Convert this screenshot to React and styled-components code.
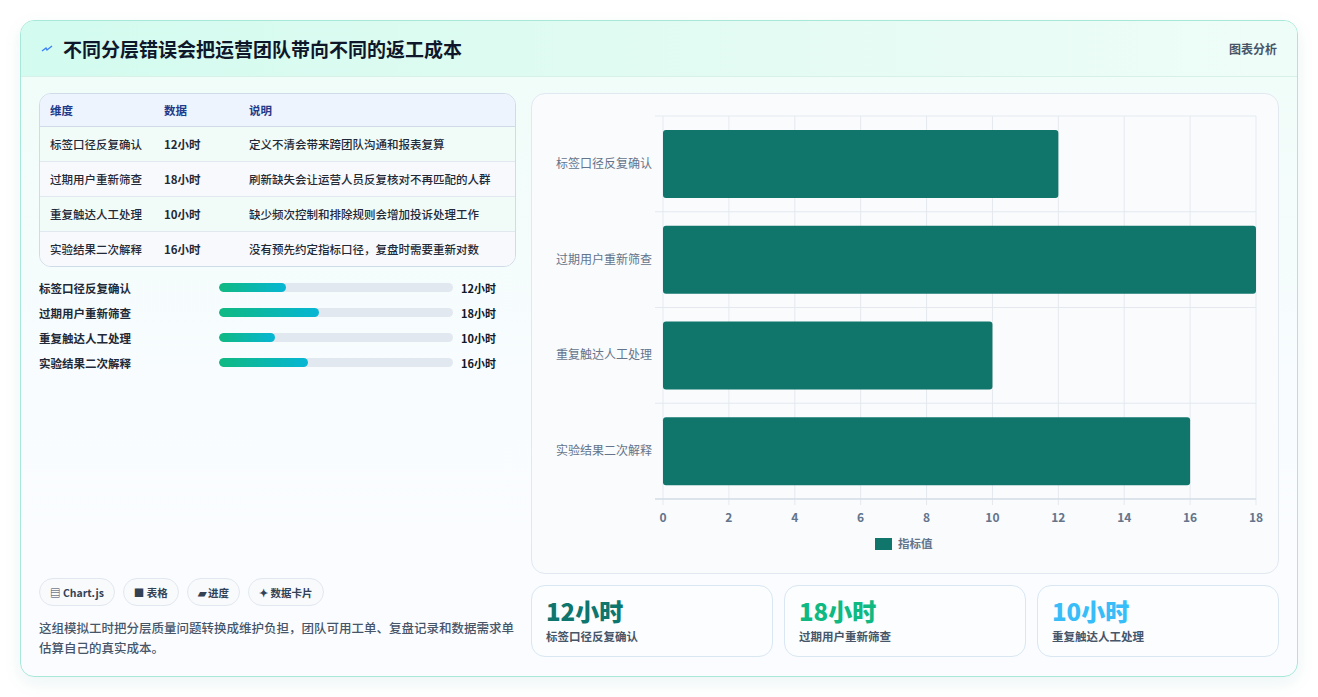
import React from 'react';
import styled, { createGlobalStyle } from 'styled-components';

const Global = createGlobalStyle`
  html, body { margin: 0; background: #f3f4f6; }
  body { font-family: "Noto Sans CJK SC", "Noto Sans", sans-serif; color: #1f2937; }
`;

const rows = [
  { name: '标签口径反复确认', value: 12, note: '定义不清会带来跨团队沟通和报表复算' },
  { name: '过期用户重新筛查', value: 18, note: '刷新缺失会让运营人员反复核对不再匹配的人群' },
  { name: '重复触达人工处理', value: 10, note: '缺少频次控制和排除规则会增加投诉处理工作' },
  { name: '实验结果二次解释', value: 16, note: '没有预先约定指标口径，复盘时需要重新对数' },
];

const Page = styled.div`
  background: #fff;
  padding: 20px 20px 20px 20px;
  height: 657px;
`;

const Card = styled.div`
  border: 1px solid #a7e8d8;
  border-radius: 14px;
  overflow: hidden;
  background: linear-gradient(180deg, #effdf8 0%, #f9fcff 60%, #fbfcff 100%);
  box-shadow: 0 6px 18px rgba(15, 118, 110, 0.08);
  height: 655px;
  display: flex;
  flex-direction: column;
`;

const Header = styled.div`
  height: 55px;
  display: flex;
  align-items: center;
  justify-content: space-between;
  padding: 0 20px 0 20px;
  background: linear-gradient(90deg, #d3fbef 0%, #e4fbf3 60%, #effdf8 100%);
  border-bottom: 1px solid #d7f1e9;
`;

const Title = styled.h1`
  margin: 0;
  font-size: 19px;
  font-weight: 700;
  color: #0f172a;
  display: flex;
  align-items: center;
  gap: 10px;
`;

const HeaderTag = styled.span`
  font-size: 12px;
  color: #475569;
  font-weight: 600;
`;

const Body = styled.div`
  flex: 1;
  display: grid;
  grid-template-columns: 477px 748px;
  gap: 15px;
  padding: 16px 18px 18px 18px;
`;

const Left = styled.div`
  display: flex;
  flex-direction: column;
`;

const Table = styled.table`
  width: 100%;
  border-collapse: separate;
  border-spacing: 0;
  border: 1px solid #cfdbe8;
  border-radius: 12px;
  overflow: hidden;
  font-size: 11.5px;
  background: #f8fafc;
`;

const Th = styled.th`
  text-align: left;
  font-weight: 600;
  color: #1e3a8a;
  background: #eef4fe;
  height: 32px;
  padding: 0 10px;
  border-bottom: 1px solid #cfdbe8;
`;

const Td = styled.td`
  height: 34px;
  padding: 0 10px;
  color: #1f2937;
  font-weight: ${p => (p.$bold ? 600 : 500)};
  border-top: ${p => (p.$first ? 'none' : '1px solid #e2e8f0')};
  background: ${p => (p.$alt ? '#f7f9fc' : '#f1fbf7')};
`;

const Progress = styled.div`
  margin-top: 12px;
  display: flex;
  flex-direction: column;
  gap: 8px;
`;

const PRow = styled.div`
  display: grid;
  grid-template-columns: 172px 234px 1fr;
  gap: 0 8px;
  align-items: center;
  font-size: 11.5px;
  height: 17px;
`;

const PLabel = styled.span`
  font-weight: 600;
  color: #1f2937;
`;

const Track = styled.div`
  height: 9px;
  border-radius: 5px;
  background: #e2e8f0;
  overflow: hidden;
`;

const Fill = styled.div`
  height: 100%;
  border-radius: 5px;
  background: linear-gradient(90deg, #10b981, #06b6d4);
`;

const PValue = styled.span`
  font-weight: 700;
  color: #111827;
  font-size: 11px;
`;

const Spacer = styled.div`
  flex: 1;
`;

const Chips = styled.div`
  display: flex;
  gap: 8px;
`;

const Chip = styled.span`
  height: 26px;
  padding: 0 10px;
  border: 1px solid #e2e8f0;
  border-radius: 14px;
  background: #f8fafc;
  font-size: 10.5px;
  font-weight: 700;
  color: #334155;
  display: flex;
  align-items: center;
  gap: 3px;
`;

const Desc = styled.p`
  margin: 12px 0 0;
  font-size: 12.5px;
  line-height: 20px;
  color: #475569;
  font-weight: 500;
`;

const Right = styled.div`
  display: flex;
  flex-direction: column;
  gap: 11px;
`;

const ChartPanel = styled.div`
  height: 479px;
  border: 1px solid #e2e8f0;
  border-radius: 14px;
  background: #f9fbfd;
`;

const Stats = styled.div`
  display: grid;
  grid-template-columns: repeat(3, 1fr);
  gap: 11px;
`;

const Stat = styled.div`
  height: 72px;
  border: 1px solid #d9e7f3;
  border-radius: 14px;
  background: #fbfdff;
  padding: 10px 14px;
  box-sizing: border-box;
`;

const StatValue = styled.div`
  font-size: 24px;
  font-weight: 800;
  line-height: 30px;
  color: ${p => p.$color};
`;

const StatLabel = styled.div`
  font-size: 11.5px;
  color: #475569;
  font-weight: 600;
  margin-top: 2px;
`;

const Chart = () => {
  const x0 = 131, x1 = 724, yTop = 22, yBot = 405;
  const sx = v => x0 + ((x1 - x0) * v) / 18;
  const band = (yBot - yTop) / 4;
  return (
    <svg width="748" height="479" style={{ display: 'block' }}>
      {[0, 2, 4, 6, 8, 10, 12, 14, 16, 18].map(t => (
        <g key={t}>
          <line x1={sx(t)} x2={sx(t)} y1={yTop} y2={yBot + 6} stroke="#e5e9ef" />
          <text x={sx(t)} y={428} textAnchor="middle" fontSize="12" fontWeight="600" fill="#64748b">{t}</text>
        </g>
      ))}
      {[0, 1, 2, 3, 4].map(i => (
        <line key={i} x1={x0 - 8} x2={x1} y1={yTop + band * i} y2={yTop + band * i} stroke="#e5e9ef" />
      ))}
      <line x1={x0 - 8} x2={x1} y1={yBot} y2={yBot} stroke="#cbd5e1" />
      {rows.map((r, i) => {
        const cy = yTop + band * i + band / 2;
        return (
          <g key={r.name}>
            <rect x={x0} y={cy - 34} width={sx(r.value) - x0} height={68} rx="3" fill="#10766c" />
            <text x={x0 - 11} y={cy + 4} textAnchor="end" fontSize="12" fill="#64748b">{r.name}</text>
          </g>
        );
      })}
      <rect x="343" y="444" width="17" height="12" fill="#10766c" />
      <text x="366" y="454" fontSize="11.5" fontWeight="600" fill="#64748b">指标值</text>
    </svg>
  );
};

export default function App() {
  return (
    <>
      <Global />
      <Page>
        <Card>
          <Header>
            <Title>
              <svg width="12" height="10" viewBox="0 0 12 10">
                <path d="M1 7 L5 4 L6 6 L11 2" stroke="#3b82f6" strokeWidth="1.4" fill="none" />
              </svg>
              不同分层错误会把运营团队带向不同的返工成本
            </Title>
            <HeaderTag>图表分析</HeaderTag>
          </Header>
          <Body>
            <Left>
              <Table>
                <thead>
                  <tr>
                    <Th style={{ width: 94 }}>维度</Th>
                    <Th style={{ width: 65 }}>数据</Th>
                    <Th>说明</Th>
                  </tr>
                </thead>
                <tbody>
                  {rows.map((r, i) => (
                    <tr key={r.name}>
                      <Td $first={i === 0} $alt={i % 2 === 1}>{r.name}</Td>
                      <Td $first={i === 0} $alt={i % 2 === 1} $bold>{r.value}小时</Td>
                      <Td $first={i === 0} $alt={i % 2 === 1}>{r.note}</Td>
                    </tr>
                  ))}
                </tbody>
              </Table>
              <Progress>
                {rows.map(r => (
                  <PRow key={r.name}>
                    <PLabel>{r.name}</PLabel>
                    <Track>
                      <Fill style={{ width: `${(r.value / 42) * 100}%` }} />
                    </Track>
                    <PValue>{r.value}小时</PValue>
                  </PRow>
                ))}
              </Progress>
              <Spacer />
              <Chips>
                <Chip>▤ Chart.js</Chip>
                <Chip>■ 表格</Chip>
                <Chip>▰ 进度</Chip>
                <Chip>✦ 数据卡片</Chip>
              </Chips>
              <Desc>这组模拟工时把分层质量问题转换成维护负担，团队可用工单、复盘记录和数据需求单估算自己的真实成本。</Desc>
            </Left>
            <Right>
              <ChartPanel>
                <Chart />
              </ChartPanel>
              <Stats>
                <Stat>
                  <StatValue $color="#0f766e">12小时</StatValue>
                  <StatLabel>标签口径反复确认</StatLabel>
                </Stat>
                <Stat>
                  <StatValue $color="#10b981">18小时</StatValue>
                  <StatLabel>过期用户重新筛查</StatLabel>
                </Stat>
                <Stat>
                  <StatValue $color="#38bdf8">10小时</StatValue>
                  <StatLabel>重复触达人工处理</StatLabel>
                </Stat>
              </Stats>
            </Right>
          </Body>
        </Card>
      </Page>
    </>
  );
}
